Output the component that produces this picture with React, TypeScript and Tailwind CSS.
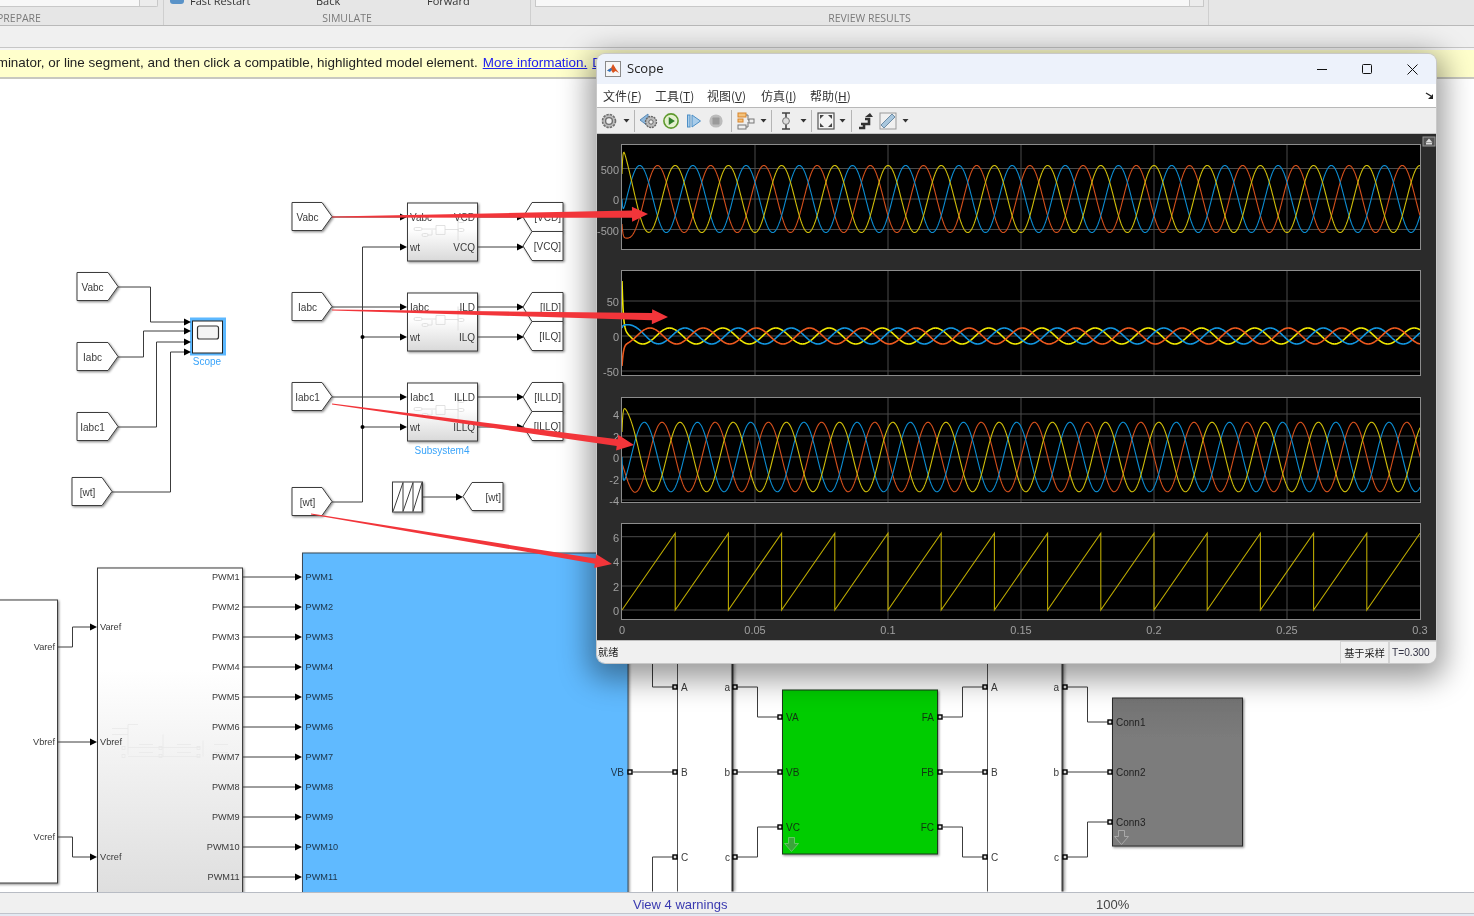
import React from "react";

// ---- scope signals, all coordinates are page pixels ----
const X0 = 622;
const X1 = 1420;
const PERIOD = 53.2;
const BLUE = "#0c8dd2";
const ORANGE = "#d4501c";
const YELLOW = "#cfbe0a";

type Wave = { color: string; peak: number; bump: number; tau: number; width?: number };

function wavePoints(center: number, amp: number, w: Wave) {
  const pts: string[] = [];
  for (let d = 0; d <= X1 - X0; d += 0.5) {
    const base = -amp * Math.cos((2 * Math.PI * (d - w.peak)) / PERIOD) * (1 - Math.exp(-d / 0.8));
    const y = center + base + w.bump * Math.exp(-d / w.tau);
    pts.push(`${(X0 + d).toFixed(1)},${y.toFixed(1)}`);
  }
  return pts.join(" ");
}

function sawPoints() {
  const pts: string[] = [];
  for (let x = X0; x < X1; x += PERIOD) {
    pts.push(`${x.toFixed(1)},610`);
    const end = x + PERIOD;
    if (end > X1) {
      pts.push(`${X1},${(610 - (76.7 * (X1 - x)) / PERIOD).toFixed(1)}`);
    } else {
      pts.push(`${end.toFixed(1)},533.3`);
    }
  }
  return pts.join(" ");
}

const axes = [
  {
    top: 145,
    bottom: 249,
    center: 199,
    amp: 33.5,
    ticks: [
      ["500", 168.5],
      ["0", 199],
      ["-500", 229.5],
    ],
    waves: [
      { color: ORANGE, peak: 35.5, bump: 25, tau: 5 },
      { color: BLUE, peak: 17.7, bump: 0, tau: 5 },
      { color: YELLOW, peak: 0, bump: -25, tau: 5 },
    ],
  },
  {
    top: 271,
    bottom: 375,
    center: 336,
    amp: 8,
    ticks: [
      ["50", 301],
      ["0", 336],
      ["-50", 371],
    ],
    waves: [
      { color: "#f0e800", peak: 47.5, bump: -55, tau: 1.2, width: 1.6 },
      { color: "#1296e0", peak: 9.8, bump: -8, tau: 9, width: 1.6 },
      { color: "#ee5a1e", peak: 28, bump: 30, tau: 1.2, width: 1.6 },
    ],
  },
  {
    top: 398,
    bottom: 502,
    center: 457,
    amp: 34.7,
    ticks: [
      ["4", 414],
      ["2", 436],
      ["0", 457],
      ["-2", 479],
      ["-4", 500],
    ],
    waves: [
      { color: ORANGE, peak: 40, bump: 8, tau: 5 },
      { color: BLUE, peak: 22.3, bump: 0, tau: 5 },
      { color: YELLOW, peak: 4.8, bump: -25, tau: 6 },
    ],
  },
];

const sawTicks: [string, number][] = [
  ["6", 536.7],
  ["4", 561.3],
  ["2", 586],
  ["0", 610],
];

const xTicks: [string, number][] = [
  ["0", 622],
  ["0.05", 755],
  ["0.1", 888],
  ["0.15", 1021],
  ["0.2", 1154],
  ["0.25", 1287],
  ["0.3", 1420],
];

function AxisFrame({ top, bottom, ticks }: { top: number; bottom: number; ticks: (string | number)[][] }) {
  return (
    <g>
      <rect x={X0} y={top} width={X1 - X0} height={bottom - top} fill="#000" />
      {ticks.map(([label, y]) => (
        <g key={String(label)}>
          <line x1={X0} x2={X1} y1={y} y2={y} stroke="#4a4a4a" strokeWidth="1" />
          <text x={619} y={Number(y) + 5} textAnchor="end" fontSize="11" fill="#a0a0a0">
            {label}
          </text>
        </g>
      ))}
      {xTicks.slice(1, 6).map(([label, x]) => (
        <line key={label} x1={x} x2={x} y1={top} y2={bottom} stroke="#4a4a4a" strokeWidth="1" />
      ))}
    </g>
  );
}

function AxisBorder({ top, bottom }: { top: number; bottom: number }) {
  return <rect x={X0 - 0.5} y={top - 0.5} width={X1 - X0 + 1} height={bottom - top + 1} fill="none" stroke="#8c8c8c" strokeWidth="1" />;
}

function ScopePlots() {
  return (
    <svg viewBox="597 134 839 506" className="block w-full h-[506px]" style={{ fontFamily: '"Liberation Sans", sans-serif' }}>
      {axes.map((a) => (
        <g key={a.top}>
          <AxisFrame top={a.top} bottom={a.bottom} ticks={a.ticks} />
          {a.waves.map((w) => (
            <polyline key={w.color} points={wavePoints(a.center, a.amp, w as Wave)} fill="none" stroke={w.color} strokeWidth={(w as Wave).width ?? 1.1} />
          ))}
          <AxisBorder top={a.top} bottom={a.bottom} />
        </g>
      ))}
      <AxisFrame top={524} bottom={619} ticks={sawTicks} />
      <polyline points={sawPoints()} fill="none" stroke="#bcaa00" strokeWidth="1.1" />
      <AxisBorder top={524} bottom={619} />
      {xTicks.map(([label, x]) => (
        <text key={label} x={x} y={634} textAnchor="middle" fontSize="11" fill="#a0a0a0">
          {label}
        </text>
      ))}
      {/* small restore button in the corner */}
      <rect x="1423" y="137" width="12" height="9" fill="#555" stroke="#999" strokeWidth="1" />
      <polygon points="1429,138.5 1432.5,142.5 1425.5,142.5" fill="#ddd" />
      <rect x="1426" y="143" width="6" height="1.5" fill="#ddd" />
    </svg>
  );
}

// ---- toolbar icons ----
const Caret = () => (
  <svg width="7" height="4" viewBox="0 0 7 4">
    <polygon points="0.5,0 6.5,0 3.5,3.5" fill="#333" />
  </svg>
);
const Sep = () => <div className="w-px h-[22px] bg-[#b5b5b5]" />;

const GearIcon = () => (
  <svg width="18" height="18" viewBox="0 0 18 18">
    <circle cx="9" cy="9" r="6.5" fill="#bdbdbd" stroke="#6f6f6f" strokeWidth="1.6" strokeDasharray="2.4 1" />
    <circle cx="9" cy="9" r="3.4" fill="#eee" stroke="#6f6f6f" strokeWidth="1.4" />
  </svg>
);
const BackIcon = () => (
  <svg width="20" height="18" viewBox="0 0 20 18">
    <polygon points="1,8 9,2 9,14" fill="#8fb8dc" stroke="#5a8ab5" />
    <circle cx="12" cy="10" r="5.5" fill="#bbb" stroke="#666" strokeWidth="1.4" strokeDasharray="2 0.8" />
    <circle cx="12" cy="10" r="2.2" fill="#eee" stroke="#666" />
  </svg>
);
const PlayIcon = () => (
  <svg width="18" height="18" viewBox="0 0 18 18">
    <circle cx="9" cy="9" r="8" fill="#e4f0cf" stroke="#5f9a2e" strokeWidth="1.8" />
    <polygon points="6.5,4.6 13.4,9 6.5,13.4" fill="#2f7f2a" />
  </svg>
);
const StepIcon = () => (
  <svg width="16" height="16" viewBox="0 0 16 16">
    <rect x="1.5" y="2" width="2.5" height="12" fill="#a9cdea" stroke="#4d8fc6" />
    <polygon points="6,2 14.5,8 6,14" fill="#a9cdea" stroke="#4d8fc6" />
  </svg>
);
const StopIcon = () => (
  <svg width="18" height="18" viewBox="0 0 18 18">
    <circle cx="9" cy="9" r="8.5" fill="#bcbcbc" />
    <rect x="4.5" y="4.5" width="9" height="9" rx="1" fill="#9a9a9a" />
  </svg>
);
const BlocksIcon = () => (
  <svg width="18" height="18" viewBox="0 0 18 18">
    <rect x="1" y="1" width="8" height="4" fill="#f5c27a" stroke="#d8832a" />
    <rect x="1" y="7" width="5" height="3" fill="#f5c27a" stroke="#d8832a" />
    <rect x="1" y="13" width="8" height="4" fill="#eee" stroke="#777" />
    <rect x="12" y="7" width="5" height="4" fill="#eee" stroke="#777" />
    <path d="M9 3h2v5h1M9 15h2v-5" fill="none" stroke="#777" />
  </svg>
);
const ProbeIcon = () => (
  <svg width="14" height="18" viewBox="0 0 14 18">
    <path d="M3 1h8M7 1v5M3 17h8M7 12v5" stroke="#444" strokeWidth="1.6" />
    <circle cx="7" cy="9" r="3.4" fill="#ddd" stroke="#777" />
  </svg>
);
const FitIcon = () => (
  <svg width="18" height="18" viewBox="0 0 18 18">
    <rect x="1" y="1" width="16" height="16" fill="#f4f4f4" stroke="#555" strokeWidth="1.2" />
    <polygon points="3,3 7,3 3,7" fill="#444" />
    <polygon points="15,3 11,3 15,7" fill="#444" />
    <polygon points="3,15 7,15 3,11" fill="#444" />
    <polygon points="15,15 11,15 15,11" fill="#444" />
  </svg>
);
const StairsIcon = () => (
  <svg width="16" height="18" viewBox="0 0 16 18">
    <path d="M1 16h5v-4H3M6 12h5V7H7" fill="none" stroke="#333" strokeWidth="2.6" />
    <polygon points="7,5 12,1 15,5" fill="#333" />
  </svg>
);
const RulerIcon = () => (
  <svg width="18" height="18" viewBox="0 0 18 18">
    <rect x="1" y="1" width="16" height="16" fill="#f0f0f0" stroke="#999" />
    <polygon points="2,13 13,2 16,5 5,16" fill="#a8c6dd" stroke="#6d8da6" />
  </svg>
);

const MatlabLogo = () => (
  <svg width="16" height="16" viewBox="0 0 16 16">
    <rect x="0.5" y="0.5" width="15" height="15" fill="#f6f6f6" stroke="#8a8a8a" />
    <polygon points="2,9.5 6,7 8,3 11,8 14,12 10.5,10 8,12 6,9" fill="#d9531e" />
    <polygon points="2,9.5 6,7 7,8.5 5,11" fill="#2f74c0" />
  </svg>
);

function Menu({ name, k }: { name: string; k: string }) {
  return (
    <span className="whitespace-nowrap">
      {name}(<span className="underline">{k}</span>)
    </span>
  );
}

function ScopeWindow() {
  return (
    <div className="absolute left-[597px] top-[54px] w-[839px] h-[609px] flex flex-col rounded-[8px] overflow-hidden shadow-[0_0_0_1px_#c8c8c8,0_8px_30px_8px_rgba(0,0,0,0.4)] z-10">
      <div className="h-[30px] shrink-0 bg-[#edf2fb] flex items-center pl-[8px]">
        <MatlabLogo />
        <span className="ml-[6px] text-[13px] text-[#222] font-['Open_Sans',sans-serif]">Scope</span>
        <div className="ml-auto flex items-center pr-[18px] gap-[35px] text-[#111]">
          <svg width="10" height="10" viewBox="0 0 10 10">
            <path d="M0 5.5h10" stroke="#111" />
          </svg>
          <svg width="10" height="10" viewBox="0 0 10 10">
            <rect x="0.5" y="0.5" width="9" height="9" rx="1" fill="none" stroke="#111" />
          </svg>
          <svg width="11" height="11" viewBox="0 0 11 11">
            <path d="M0.5 0.5l10 10M10.5 0.5l-10 10" stroke="#111" />
          </svg>
        </div>
      </div>
      <div className="h-[24px] shrink-0 bg-white border-b border-[#b8b8b8] flex items-center pl-[6px] text-[12px] text-[#333] font-['Noto_Sans_CJK_SC',sans-serif]">
        <div className="w-[52px]"><Menu name="文件" k="F" /></div>
        <div className="w-[52px]"><Menu name="工具" k="T" /></div>
        <div className="w-[54px]"><Menu name="视图" k="V" /></div>
        <div className="w-[49px]"><Menu name="仿真" k="I" /></div>
        <div><Menu name="帮助" k="H" /></div>
        <svg className="ml-auto mr-[2px]" width="9" height="8" viewBox="0 0 9 8">
          <path d="M1 1l5 3" stroke="#222" strokeWidth="1.4" />
          <polygon points="3,7 8,7 8,2" fill="#222" />
        </svg>
      </div>
      <div className="h-[26px] shrink-0 bg-[#eeeeee] border-b border-[#c4c4c4] flex items-center pl-[3px]">
        <div className="w-[18px] flex justify-center"><GearIcon /></div>
        <div className="w-[16px] flex justify-center"><Caret /></div>
        <Sep />
        <div className="w-[28px] flex justify-center"><BackIcon /></div>
        <div className="w-[16px] flex justify-center"><PlayIcon /></div>
        <div className="w-[30px] flex justify-center"><StepIcon /></div>
        <div className="w-[14px] flex justify-center"><StopIcon /></div>
        <div className="w-[8px]" />
        <Sep />
        <div className="w-[27px] flex justify-center"><BlocksIcon /></div>
        <div className="w-[9px] flex justify-center"><Caret /></div>
        <div className="w-[3px]" />
        <Sep />
        <div className="w-[27px] flex justify-center"><ProbeIcon /></div>
        <div className="w-[8px] flex justify-center"><Caret /></div>
        <div className="w-[4px]" />
        <Sep />
        <div className="w-[27px] flex justify-center"><FitIcon /></div>
        <div className="w-[7px] flex justify-center"><Caret /></div>
        <div className="w-[5px]" />
        <Sep />
        <div className="w-[27px] flex justify-center"><StairsIcon /></div>
        <div className="w-[18px] flex justify-center"><RulerIcon /></div>
        <div className="w-[17px] flex justify-center"><Caret /></div>
      </div>
      <div className="shrink-0 bg-[#2b2b2b]">
        <ScopePlots />
      </div>
      <div className="flex-1 bg-[#f0f0f0] border-t border-[#bdbdbd] flex items-center text-[10.2px] text-[#222] font-['Noto_Sans_CJK_SC',sans-serif]">
        <span className="pl-[1px]">就绪</span>
        <div className="ml-auto flex h-full">
          <div className="w-[49px] border-l border-r border-t border-[#d4d4d4] flex items-center justify-center">基于采样</div>
          <div className="w-[47px] border-l border-t border-[#d4d4d4] flex items-center pl-[2px] font-['Liberation_Sans',sans-serif] text-[#334]">T=0.300</div>
        </div>
      </div>
    </div>
  );
}

// ---- model canvas ----
const INK = "#3c3c3c";
const TEXT = "#3a3a3a";

function Label({ x, y, children, end, size = 10, fill = TEXT, mid }: { x: number; y: number; children: string; end?: boolean; mid?: boolean; size?: number; fill?: string }) {
  return (
    <text x={x} y={y + size * 0.41} fontSize={size} fill={fill} textAnchor={end ? "end" : mid ? "middle" : "start"}>
      {children}
    </text>
  );
}

function TagOut({ x, y, w = 40, h = 28, label }: { x: number; y: number; w?: number; h?: number; label: string }) {
  const tip = x + w;
  return (
    <g>
      <polygon points={`${x},${y} ${tip - 10},${y} ${tip},${y + h / 2} ${tip - 10},${y + h} ${x},${y + h}`} fill="#fff" stroke={INK} filter="url(#drop)" />
      <Label x={x + 15.5} y={y + h / 2} mid>
        {label}
      </Label>
    </g>
  );
}

function TagIn({ x, y, w = 40, h = 29, label }: { x: number; y: number; w?: number; h?: number; label: string }) {
  const right = x + w;
  return (
    <g>
      <polygon points={`${x},${y + h / 2} ${x + 9},${y} ${right},${y} ${right},${y + h} ${x + 9},${y + h}`} fill="#fff" stroke={INK} filter="url(#drop)" />
      <Label x={right - 2} y={y + h / 2} end>
        {label}
      </Label>
    </g>
  );
}

function Wire({ d }: { d: string }) {
  return <path d={d} fill="none" stroke={INK} strokeWidth="1" />;
}

function Head({ x, y }: { x: number; y: number }) {
  return <polygon points={`${x - 7},${y - 3.5} ${x},${y} ${x - 7},${y + 3.5}`} fill="#000" />;
}

function Port({ x, y }: { x: number; y: number }) {
  return <rect x={x - 2} y={y - 2} width="4" height="4" fill="#ddd" stroke="#000" strokeWidth="1.4" />;
}

function MiniMask({ x, y }: { x: number; y: number }) {
  return (
    <g transform={`translate(${x} ${y})`} fill="none" stroke="#dadada" strokeWidth="0.8">
      <rect x="0" y="-3" width="8" height="3" rx="1.5" />
      <rect x="8" y="3" width="6" height="3" rx="1.5" />
      <path d="M8 -1.5h14M14 4.5h4v-5M22 -5h9v9h-9z" />
      <path d="M31 -1h13M44 -14v24" />
      <rect x="44" y="-11" width="6" height="3" rx="1.5" />
      <rect x="44" y="-2" width="6" height="3" rx="1.5" />
    </g>
  );
}

function Subsystem({ y, in1, out1, out2 }: { y: number; in1: string; out1: string; out2: string }) {
  return (
    <g>
      <rect x="407.5" y={y + 0.5} width="70" height="58" fill="url(#sub)" stroke={INK} filter="url(#drop)" />
      <MiniMask x={414} y={y + 28} />
      <Label x={410} y={y + 14}>
        {in1}
      </Label>
      <Label x={410} y={y + 44}>
        wt
      </Label>
      <Label x={475} y={y + 14} end>
        {out1}
      </Label>
      <Label x={475} y={y + 44} end>
        {out2}
      </Label>
      <Wire d={`M478 ${y + 14.5}H517M478 ${y + 44.5}H517`} />
      <Head x={407} y={y + 14.5} />
      <Head x={407} y={y + 44.5} />
      <Head x={524} y={y + 14.5} />
      <Head x={524} y={y + 44.5} />
    </g>
  );
}

const pwmRows = [577, 607, 637, 667, 697, 727, 757, 787, 817, 847, 877];

function DownArrow({ x, y, fill, stroke }: { x: number; y: number; fill: string; stroke: string }) {
  return <polygon points={`${x - 3},${y - 7} ${x + 3},${y - 7} ${x + 3},${y - 1} ${x + 7},${y - 1} ${x},${y + 7} ${x - 7},${y - 1} ${x - 3},${y - 1}`} fill={fill} stroke={stroke} />;
}

function ModelDiagram() {
  return (
    <svg viewBox="0 80 1474 812" className="block w-full h-full" style={{ fontFamily: '"Liberation Sans", sans-serif' }}>
      <defs>
        <filter id="drop" x="-20%" y="-20%" width="140%" height="140%">
          <feDropShadow dx="1.2" dy="1.2" stdDeviation="1" floodColor="#000" floodOpacity="0.45" />
        </filter>
        <filter id="busdrop" x="-300%" y="-5%" width="700%" height="110%">
          <feDropShadow dx="1.4" dy="0" stdDeviation="1" floodColor="#000" floodOpacity="0.45" />
        </filter>
        <linearGradient id="sub" x1="0" y1="0" x2="0" y2="1">
          <stop offset="0.45" stopColor="#ffffff" />
          <stop offset="1" stopColor="#d9d9d9" />
        </linearGradient>
        <linearGradient id="tall" x1="0" y1="0" x2="0" y2="1">
          <stop offset="0.3" stopColor="#ffffff" />
          <stop offset="1" stopColor="#dcdcdc" />
        </linearGradient>
        <linearGradient id="gray" x1="0" y1="0" x2="0" y2="1">
          <stop offset="0" stopColor="#737373" />
          <stop offset="0.3" stopColor="#7c7c7c" />
        </linearGradient>
      </defs>

      {/* scope group */}
      <TagOut x={77} y={273} w={41} label="Vabc" />
      <TagOut x={77} y={343} w={41} label="Iabc" />
      <TagOut x={77} y={413} w={41} label="Iabc1" />
      <TagOut x={72} y={478} w={40} label="[wt]" />
      <Wire d="M118 287.5H150.5V322.5H186M118 357.5H143.5V331.5H186M118 427.5H156.5V342.5H186M112 492.5H170.5V352.5H186" />
      <rect x="190" y="318" width="36" height="38" fill="#5cb8ff" />
      <Head x={191} y={322.5} />
      <Head x={191} y={331.5} />
      <Head x={191} y={342.5} />
      <Head x={191} y={352.5} />
      <rect x="192.5" y="321.5" width="30" height="32" fill="#fff" stroke="#222" />
      <rect x="197.5" y="326.5" width="21" height="13" rx="2" fill="#f4f4f4" stroke="#333" strokeWidth="1.2" />
      <Label x={207} y={361} mid fill="#3aa4fa">
        Scope
      </Label>

      {/* dq subsystems */}
      <TagOut x={292} y={203} label="Vabc" />
      <TagOut x={292} y={293} label="Iabc" />
      <TagOut x={292} y={383} label="Iabc1" />
      <TagOut x={292} y={488} label="[wt]" />
      <Wire d="M332 217.5H400M332 307.5H400M332 397.5H400M332 502.5H362.5V247.5H400M362.5 337.5H400M362.5 427.5H400" />
      <circle cx="362.5" cy="337.5" r="2" fill="#000" />
      <circle cx="362.5" cy="427.5" r="2" fill="#000" />
      <Subsystem y={203} in1="Vabc" out1="VCD" out2="VCQ" />
      <Subsystem y={293} in1="Iabc" out1="ILD" out2="ILQ" />
      <Subsystem y={383} in1="Iabc1" out1="ILLD" out2="ILLQ" />
      <Label x={442} y={450} mid fill="#3aa4fa">
        Subsystem4
      </Label>
      <TagIn x={523} y={203} label="[VCD]" />
      <TagIn x={523} y={232} label="[VCQ]" />
      <TagIn x={523} y={293} label="[ILD]" />
      <TagIn x={523} y={322} label="[ILQ]" />
      <TagIn x={523} y={383} label="[ILLD]" />
      <TagIn x={523} y={412} label="[ILLQ]" />

      <rect x="392.5" y="482.5" width="30" height="30" fill="#fff" stroke={INK} filter="url(#drop)" />
      <path d="M393 512L403 483V512L413 483V512L422 483V512" fill="none" stroke={INK} />
      <Wire d="M423 497.5H456" />
      <Head x={463} y={497.5} />
      <TagIn x={463} y={483} h={28} label="[wt]" />

      {/* controller + PWM */}
      <rect x="-5" y="600.5" width="62.5" height="283" fill="#fff" stroke={INK} filter="url(#drop)" />
      <Label x={55} y={647} end size={9.2}>Varef</Label>
      <Label x={55} y={742} end size={9.2}>Vbref</Label>
      <Label x={55} y={837} end size={9.2}>Vcref</Label>
      <Wire d="M58 647.5H72.5V627.5H90M58 742.5H90M58 837.5H72.5V857.5H90" />
      <rect x="97.5" y="568.5" width="145" height="340" fill="url(#tall)" stroke={INK} filter="url(#drop)" />
      <g fill="none" stroke="#e8e8e8" strokeWidth="0.8">
        <path d="M112 729h16M112 735h16M128 725v30M128 725h10M128 748h72M128 757h72M163 735v22M203 741v16" />
        <rect x="122" y="747" width="3" height="3" />
        <rect x="122" y="755" width="3" height="3" />
        <rect x="159" y="747" width="3" height="3" />
        <rect x="159" y="755" width="3" height="3" />
        <rect x="197" y="747" width="3" height="3" />
        <rect x="197" y="755" width="3" height="3" />
        <path d="M139 745h14M139 753h14M177 745h14M177 753h14M214 745h14M214 753h14" />
      </g>
      <Head x={97} y={627.5} />
      <Head x={97} y={742.5} />
      <Head x={97} y={857.5} />
      <Label x={100} y={627} size={9.2}>Varef</Label>
      <Label x={100} y={742} size={9.2}>Vbref</Label>
      <Label x={100} y={857} size={9.2}>Vcref</Label>

      <rect x="302.5" y="553.5" width="325.5" height="345" fill="#60baff" stroke="#3a4a58" filter="url(#drop)" />
      {pwmRows.map((y, i) => (
        <g key={y}>
          <Wire d={`M243 ${y + 0.5}H296`} />
          <Head x={302} y={y + 0.5} />
          <Label x={239.5} y={y} end size={9.2}>{`PWM${i + 1}`}</Label>
          <Label x={305.5} y={y} size={9.2} fill="#1d3347">{`PWM${i + 1}`}</Label>
        </g>
      ))}

      {/* power stage, the buses are filled rects so the drop filter has a box to work on */}
      <Label x={624} y={772} end fill="#1d3347">VB</Label>
      <Port x={630} y={772.5} />
      <rect x="677" y="600" width="1" height="292" fill="#555" />
      <rect x="731.5" y="600" width="2" height="292" fill="#333" filter="url(#busdrop)" />
      <rect x="987" y="600" width="1" height="292" fill="#555" />
      <rect x="1061.5" y="600" width="2" height="292" fill="#444" filter="url(#busdrop)" />
      <Wire d="M632 772.5H675M652.5 600V687.5H675M652.5 892V857.5H675" />
      <Port x={675} y={687.5} />
      <Port x={675} y={772.5} />
      <Port x={675} y={857.5} />
      <Label x={681} y={687}>A</Label>
      <Label x={681} y={772}>B</Label>
      <Label x={681} y={857}>C</Label>

      <Label x={730} y={687} end>a</Label>
      <Label x={730} y={772} end>b</Label>
      <Label x={730} y={857} end>c</Label>
      <Wire d="M735 687.5H757.5V717.5H780M735 772.5H780M735 857.5H757.5V827.5H780" />
      <Port x={735} y={687.5} />
      <Port x={735} y={772.5} />
      <Port x={735} y={857.5} />
      <rect x="782.5" y="690.5" width="155" height="164" fill="#00cc00" stroke="#1c3a1c" filter="url(#drop)" />
      <Port x={780} y={717.5} />
      <Port x={780} y={772.5} />
      <Port x={780} y={827.5} />
      <Label x={786} y={717} fill="#123312">VA</Label>
      <Label x={786} y={772} fill="#123312">VB</Label>
      <Label x={786} y={827} fill="#123312">VC</Label>
      <Label x={934} y={717} end fill="#123312">FA</Label>
      <Label x={934} y={772} end fill="#123312">FB</Label>
      <Label x={934} y={827} end fill="#123312">FC</Label>
      <DownArrow x={791.5} y={845} fill="#3aa53a" stroke="#62c862" />
      <Port x={940} y={717.5} />
      <Port x={940} y={772.5} />
      <Port x={940} y={827.5} />
      <Wire d="M942 717.5H962.5V687.5H985M942 772.5H985M942 827.5H962.5V857.5H985" />
      <Port x={985} y={687.5} />
      <Port x={985} y={772.5} />
      <Port x={985} y={857.5} />
      <Label x={991} y={687}>A</Label>
      <Label x={991} y={772}>B</Label>
      <Label x={991} y={857}>C</Label>

      <Label x={1059} y={687} end>a</Label>
      <Label x={1059} y={772} end>b</Label>
      <Label x={1059} y={857} end>c</Label>
      <Wire d="M1065 687.5H1087.5V722.5H1110M1065 772.5H1110M1065 857.5H1087.5V822.5H1110" />
      <Port x={1065} y={687.5} />
      <Port x={1065} y={772.5} />
      <Port x={1065} y={857.5} />
      <rect x="1112.5" y="698.5" width="130" height="148" fill="url(#gray)" stroke="#2c2c2c" filter="url(#drop)" />
      <Port x={1110} y={722.5} />
      <Port x={1110} y={772.5} />
      <Port x={1110} y={822.5} />
      <Label x={1116} y={722} fill="#222">Conn1</Label>
      <Label x={1116} y={772} fill="#222">Conn2</Label>
      <Label x={1116} y={822} fill="#222">Conn3</Label>
      <DownArrow x={1121.5} y={838} fill="#777" stroke="#a8a8a8" />
    </svg>
  );
}

// ---- red annotation arrows drawn over everything ----
function arrowShape(x0: number, y0: number, x1: number, y1: number, back: number, shaft: number, head: number) {
  const len = Math.hypot(x1 - x0, y1 - y0);
  const ux = (x1 - x0) / len;
  const uy = (y1 - y0) / len;
  const bx = x1 - ux * back;
  const by = y1 - uy * back;
  const at = (s: number) => `${(bx - uy * s).toFixed(1)},${(by + ux * s).toFixed(1)}`;
  const tail = (s: number) => `${(x0 - uy * s).toFixed(1)},${(y0 + ux * s).toFixed(1)}`;
  return `${tail(-0.4)} ${at(-shaft)} ${at(-head)} ${x1},${y1} ${at(head)} ${at(shaft)} ${tail(0.4)}`;
}

const redArrows = [
  arrowShape(332, 217, 648, 214, 16, 3.6, 7.5),
  arrowShape(332, 310, 668, 317, 16, 3.6, 7.5),
  arrowShape(332, 404, 634, 445, 17, 3.4, 8),
  arrowShape(311, 514, 612, 564, 17, 2.6, 7),
];

export default function App() {
  return (
    <div className="relative w-[1474px] h-[916px] overflow-hidden bg-white flex flex-col blur-[0.35px] font-['Liberation_Sans',sans-serif]">
      {/* ribbon, cut off at the top of the shot */}
      <div className="h-[26px] shrink-0 bg-[#e6e6e6] border-b border-[#b9b9b9] flex text-[10.5px] text-[#7a7a7a] font-['Open_Sans',sans-serif]">
        <div className="w-[164px] shrink-0 border-r border-[#cfcfcf] flex flex-col overflow-hidden">
          <div className="h-[8px] w-[158px] flex">
            <div className="w-[140px] bg-[#f7f7f7] border-b border-r border-[#c8c8c8]" />
            <div className="w-[18px] bg-[#ececec] border-b border-r border-[#c8c8c8] rounded-br-[2px]" />
          </div>
          <span className="mt-[4px] -ml-[3px] leading-[14px]">PREPARE</span>
        </div>
        <div className="w-[367px] shrink-0 border-r border-[#cfcfcf] flex flex-col overflow-hidden relative">
          <div className="h-[8px] flex items-end text-[11px] text-[#333] overflow-hidden">
            <span className="ml-[6px] mb-[3px] w-[14px] h-[5px] bg-[#5a93c8] rounded-b-[3px]" />
            <span className="ml-[6px] w-[126px] leading-[13px] mb-[0px]">Fast Restart</span>
            <span className="w-[111px] leading-[13px]">Back</span>
            <span className="leading-[13px]">Forward</span>
          </div>
          <span className="mt-[4px] text-center leading-[14px]">SIMULATE</span>
        </div>
        <div className="w-[678px] shrink-0 border-r border-[#cfcfcf] flex flex-col overflow-hidden">
          <div className="h-[8px] mx-[4px] flex">
            <div className="flex-1 bg-[#f7f7f7] border-b border-l border-[#c8c8c8]" />
            <div className="w-[15px] bg-[#ececec] border-b border-x border-[#c8c8c8]" />
          </div>
          <span className="mt-[4px] text-center leading-[14px]">REVIEW RESULTS</span>
        </div>
      </div>
      <div className="h-[22px] shrink-0 bg-[#f0f0f0] border-b border-[#c6c6c6]" />
      <div className="h-[2px] shrink-0 bg-[#f4f4f4]" />
      <div className="h-[29px] shrink-0 bg-[#ffffcc] border-b-2 border-[#c8c8c0] flex items-center whitespace-nowrap overflow-hidden text-[13.45px] text-[#222]">
        <span className="-ml-[19px]">terminator, or line segment, and then click a compatible, highlighted model element.</span>
        <span className="ml-[5px] text-[#2222ee] underline">More information.</span>
        <span className="ml-[5px] text-[#2222ee] underline">D</span>
      </div>

      <div className="flex-1 min-h-0 relative bg-white">
        <ModelDiagram />
      </div>

      <div className="h-[21px] shrink-0 bg-[#f0f0f0] border-t border-[#b8bcc4] flex items-center pt-[4px] text-[13px]">
        <span className="ml-[633px] w-[463px] text-[#3a3ab0]">View 4 warnings</span>
        <span className="text-[#444]">100%</span>
      </div>
      <div className="h-[3px] shrink-0 bg-[#e3e9f2] border-t border-[#c0c4cc]" />

      <ScopeWindow />

      <svg className="absolute inset-0 z-20 pointer-events-none" width="1474" height="916" viewBox="0 0 1474 916">
        {redArrows.map((pts) => (
          <polygon key={pts} points={pts} fill="#f2353a" />
        ))}
      </svg>
    </div>
  );
}
